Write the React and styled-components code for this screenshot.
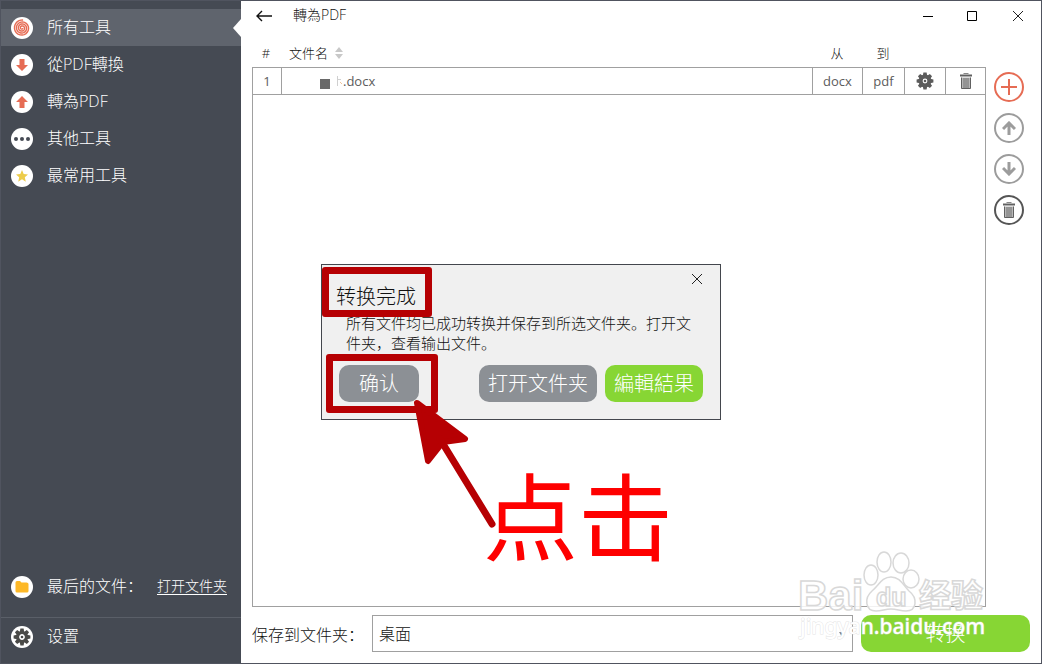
import React from "react";
import styled, { createGlobalStyle } from "styled-components";

const GlobalStyle = createGlobalStyle`
  * {
    box-sizing: border-box;
  }
  body {
    margin: 0;
    background: #fff;
    color: #111;
    font-family: "Open Sans", "Noto Sans CJK SC", sans-serif;
    font-size: 16px;
    font-weight: 300;
  }
  button, select {
    font: inherit;
    color: inherit;
    margin: 0;
    padding: 0;
    border: 0;
    background: none;
    cursor: pointer;
  }
  svg {
    display: block;
  }
`;

const Window = styled.div`
  position: relative;
  display: grid;
  grid-template-columns: 240px 1fr;
  min-height: 100vh;
  border: 1px solid #50545f;
`;

const Sidebar = styled.aside`
  display: flex;
  flex-direction: column;
  padding-top: 8px;
  background: #454a53;
  color: #fff;
`;

const Menu = styled.nav`
  flex: 1;
`;

const MenuItem = styled.button`
  position: relative;
  display: flex;
  align-items: center;
  gap: 14px;
  width: 100%;
  height: 37px;
  padding-left: 10px;
  text-align: left;
  background: ${(props) => (props.$active ? "#5f646d" : "transparent")};
  &:hover {
    background: #5f646d;
  }
`;

const MenuLabel = styled.span`
  padding-bottom: 2px;
  line-height: 24px;
`;

const Pointer = styled.span`
  position: absolute;
  right: 0;
  top: 10px;
  border: solid transparent;
  border-width: 9px 8px 9px 0;
  border-right-color: #fff;
`;

const LastFile = styled.div`
  display: flex;
  align-items: center;
  gap: 14px;
  height: 62px;
  padding: 0 14px 0 10px;
  border-bottom: 1px solid #5a5f68;
`;

const OpenLink = styled.a`
  margin-left: auto;
  padding-bottom: 4px;
  color: #fff;
  font-size: 14px;
  text-underline-offset: 3px;
`;

const Settings = styled.div`
  padding-bottom: 8px;
`;

const Main = styled.main`
  display: flex;
  flex-direction: column;
  padding-left: 11px;
`;

const TitleBar = styled.header`
  display: flex;
  align-items: center;
  height: 30px;
  padding-right: 1px;
`;

const BackButton = styled.button`
  width: 41px;
  padding-left: 4px;
`;

const Title = styled.h1`
  flex: 1;
  margin: 0;
  font-size: 14px;
  font-weight: 300;
  line-height: 28px;
  padding-bottom: 2px;
`;

const WindowButton = styled.button`
  display: grid;
  place-items: center;
  width: 45px;
  height: 28px;
`;

const Content = styled.div`
  display: flex;
  flex: 1;
  padding-top: 8px;
`;

const FilePane = styled.section`
  display: flex;
  flex: 1;
  flex-direction: column;
`;

const FileTable = styled.table`
  width: 100%;
  table-layout: fixed;
  border-spacing: 0;
  font-size: 13px;
  th {
    height: 28px;
    padding: 0 2px 0 0;
    font-weight: 300;
    line-height: 20px;
  }
  td {
    height: 28px;
    padding: 0;
    border: solid #a0a0a0;
    border-width: 1px 1px 1px 0;
    color: #5c5c5c;
    font-weight: 400;
    line-height: 20px;
    text-align: center;
  }
  td:first-child {
    border-left-width: 1px;
  }
`;

const Col = styled.col`
  width: ${(props) => props.$width};
`;

const NameHead = styled.span`
  display: flex;
  align-items: center;
  gap: 7px;
  padding-left: 7px;
`;

const FileName = styled.span`
  display: flex;
  align-items: center;
  padding-left: 38px;
`;

const Square = styled.span`
  width: 10px;
  height: 10px;
  margin: 6px 6px 0 0;
  background: #696969;
`;

const CellButton = styled.button`
  display: grid;
  place-items: center;
  width: 100%;
  height: 26px;
`;

const DropArea = styled.div`
  flex: 1;
  border: solid #a0a0a0;
  border-width: 0 1px 1px;
`;

const Tools = styled.div`
  display: flex;
  flex-direction: column;
  gap: 11px;
  width: 55px;
  padding: 33px 0 0 8px;
`;

const RoundButton = styled.button`
  display: grid;
  place-items: center;
  width: 30px;
  height: 30px;
  border: 2px solid;
  border-radius: 50%;
  color: ${(props) => props.$color};
`;

const Footer = styled.footer`
  display: flex;
  align-items: center;
  gap: 8px;
  padding: 8px 11px 11px 0;
`;

const FolderSelect = styled.select`
  flex: 1;
  height: 37px;
  padding: 0 6px;
  border: 1px solid #a0a0a0;
  appearance: none;
`;

const SelectBox = styled.div`
  position: relative;
  display: flex;
  flex: 1;
`;

const Caret = styled.span`
  position: absolute;
  right: 8px;
  top: 17px;
  border: solid transparent;
  border-width: 5px 3px 0;
  border-top-color: #888;
  pointer-events: none;
`;

const ConvertButton = styled.button`
  width: 169px;
  height: 37px;
  border-radius: 10px;
  background: #87d634;
  color: #fff;
  font-size: 20px;
  line-height: 36px;
`;

const Overlay = styled.div`
  position: absolute;
  inset: 20px 0 0;
  display: grid;
  place-items: center;
  pointer-events: none;
`;

const Dialog = styled.div`
  position: relative;
  width: 400px;
  padding: 0 17px 17px 14px;
  border: 1px solid #43464d;
  background: #f0f0f0;
  pointer-events: auto;
`;

const CloseRow = styled.div`
  display: flex;
  justify-content: flex-end;
  height: 18px;
  padding-top: 8px;
`;

const DialogTitle = styled.h2`
  margin: 0;
  font-size: 20px;
  font-weight: 300;
  line-height: 28px;
`;

const DialogText = styled.p`
  margin: 2px 0 12px;
  padding: 0 10px;
  font-size: 15px;
  line-height: 20px;
`;

const DialogButtons = styled.div`
  display: flex;
  gap: 8px;
  padding-left: 3px;
`;

const DialogButton = styled.button`
  height: 37px;
  padding: 0 ${(props) => (props.$wide ? "20px" : "9px")};
  margin-right: ${(props) => (props.$wide ? "auto" : "0")};
  border-radius: 10px;
  background: ${(props) => (props.$green ? "#87d634" : "#8c9095")};
  color: #fff;
  font-size: 20px;
  line-height: 36px;
`;

const Marker = styled.span`
  position: absolute;
  left: ${(props) => props.$left};
  top: ${(props) => props.$top};
  width: ${(props) => props.$width};
  height: ${(props) => props.$height};
  border: 7px solid #b60003;
  border-radius: 3px;
  pointer-events: none;
`;

const Arrow = styled.svg`
  position: absolute;
  left: 88px;
  top: 130px;
  pointer-events: none;
`;

const Callout = styled.strong`
  position: absolute;
  left: 161px;
  top: 193px;
  color: #fe0000;
  font-family: "Noto Sans CJK SC", sans-serif;
  font-size: 95px;
  font-weight: 400;
  line-height: 110px;
  white-space: nowrap;
  pointer-events: none;
`;

const Watermark = styled.svg`
  position: absolute;
  right: 48px;
  bottom: 17px;
  pointer-events: none;
`;

const Disc = ({ children }) => (
  <svg width="22" height="22" viewBox="0 0 22 22" aria-hidden="true">
    <circle cx="11" cy="11" r="11" fill="#fff" />
    {children}
  </svg>
);

const gearTeeth = [0, 45, 90, 135, 180, 225, 270, 315];

const Gear = ({ color, ring, size }) => (
  <svg width={size} height={size} viewBox="-9 -9 18 18" aria-hidden="true">
    {gearTeeth.map((angle) => (
      <path key={angle} d="M-1.600-8.400h3.200l.6 3.400h-4.400z" fill={color} transform={`rotate(${angle})`} />
    ))}
    <circle r="4.400" fill="none" stroke={color} strokeWidth={ring} />
    <circle r="1.300" fill={color} />
  </svg>
);

const Trash = () => (
  <svg width="12" height="17" viewBox="0 0 12 17" fill="none" stroke="#606060" aria-hidden="true">
    <path d="M3.500 .5h5" stroke="#888" />
    <path d="M0 2.500h12" strokeWidth="2" />
    <path d="M1.500 4.500v11h9v-11" fill="#b8b8b8" />
    <path d="M4 5v10M6 5v10M8 5v10" strokeWidth=".8" />
  </svg>
);

const Cross = () => (
  <svg width="12" height="12" viewBox="0 0 12 12" stroke="#222" aria-hidden="true">
    <path d="M1 1l10 10M11 1L1 11" />
  </svg>
);

const spiral = Array.from({ length: 80 }, (_, i) => {
  const angle = i * 0.3;
  const radius = 0.6 + i * 0.095;
  return `${11 + radius * Math.cos(angle)},${11 + radius * Math.sin(angle)}`;
}).join(" ");

const menu = [
  {
    label: "所有工具",
    icon: <polyline points={spiral} fill="none" stroke="#e66c54" strokeWidth="1.400" />,
  },
  { label: "從PDF轉換", icon: <path fill="#e66c54" d="M8.500 5h5v6h3.500l-6 6-6-6h3.500z" /> },
  { label: "轉為PDF", icon: <path fill="#e66c54" d="M8.500 17h5v-6h3.500l-6-6-6 6h3.500z" /> },
  {
    label: "其他工具",
    icon: (
      <g fill="#454a53">
        <circle cx="5" cy="11" r="2" />
        <circle cx="11" cy="11" r="2" />
        <circle cx="17" cy="11" r="2" />
      </g>
    ),
  },
  {
    label: "最常用工具",
    icon: <path fill="#edcc4a" d="M11 5l1.700 4 4.300.4-3.200 2.900 1 4.400-3.800-2.400-3.800 2.400 1-4.400L5 9.400 9.300 9z" />,
  },
];

const App = () => {
  return (
    <>
      <GlobalStyle />
      <Window>
        <Sidebar>
          <Menu>
            {menu.map((item, index) => (
              <MenuItem key={item.label} $active={index === 0}>
                <Disc>{item.icon}</Disc>
                <MenuLabel>{item.label}</MenuLabel>
                {index === 0 && <Pointer />}
              </MenuItem>
            ))}
          </Menu>
          <LastFile>
            <Disc>
              <path fill="#fdb827" d="M4.500 6.500q0-1.500 1.500-1.500h3l1.500 1.500h5q2 0 2 1.500v7q0 1.500-1.500 1.500H6q-1.500 0-1.500-1.500z" />
            </Disc>
            <MenuLabel>最后的文件：</MenuLabel>
            <OpenLink href="#folder">打开文件夹</OpenLink>
          </LastFile>
          <Settings>
            <MenuItem>
              <Disc>
                <svg x="2" y="2" width="18" height="18">
                  <Gear color="#4a4a48" ring="3" size="18" />
                </svg>
              </Disc>
              <MenuLabel>设置</MenuLabel>
            </MenuItem>
          </Settings>
        </Sidebar>

        <Main>
          <TitleBar>
            <BackButton aria-label="返回">
              <svg width="17" height="12" viewBox="0 0 17 12" fill="none" stroke="#111" strokeWidth="1.400">
                <path d="M16 6H1M6 1L1 6l5 5" />
              </svg>
            </BackButton>
            <Title>轉為PDF</Title>
            <WindowButton aria-label="最小化">
              <svg width="10" height="11" stroke="#000">
                <path d="M0 5.500h10" />
              </svg>
            </WindowButton>
            <WindowButton aria-label="最大化">
              <svg width="11" height="11" fill="none" stroke="#000">
                <path d="M.5.5h9v9H.5z" />
              </svg>
            </WindowButton>
            <WindowButton aria-label="关闭">
              <Cross />
            </WindowButton>
          </TitleBar>

          <Content>
            <FilePane>
              <FileTable>
                <colgroup>
                  <Col $width="30px" />
                  <Col $width="auto" />
                  <Col $width="50px" />
                  <Col $width="42px" />
                  <Col $width="41px" />
                  <Col $width="40px" />
                </colgroup>
                <thead>
                  <tr>
                    <th>#</th>
                    <th>
                      <NameHead>
                        文件名
                        <svg width="8" height="12" fill="#c8c8c8">
                          <path d="M0 5l4-5 4 5zM0 7h8l-4 5z" />
                        </svg>
                      </NameHead>
                    </th>
                    <th>从</th>
                    <th>到</th>
                    <th aria-label="设置" />
                    <th aria-label="删除" />
                  </tr>
                </thead>
                <tbody>
                  <tr>
                    <td>1</td>
                    <td>
                      <FileName>
                        <Square />
                        <svg width="7" height="12" fill="none" aria-hidden="true">
                          <path d="M1.500 1v10M2 4.500h3" stroke="#d0d0d0" />
                          <path d="M4 7l2 2" stroke="#f0c49c" />
                        </svg>
                        .docx
                      </FileName>
                    </td>
                    <td>docx</td>
                    <td>pdf</td>
                    <td>
                      <CellButton aria-label="设置">
                        <Gear color="#5c5c5c" ring="4" size="18" />
                      </CellButton>
                    </td>
                    <td>
                      <CellButton aria-label="删除">
                        <Trash />
                      </CellButton>
                    </td>
                  </tr>
                </tbody>
              </FileTable>
              <DropArea />
            </FilePane>
            <Tools>
              <RoundButton $color="#e66c54" aria-label="添加">
                <svg width="16" height="16" stroke="currentColor" strokeWidth="2">
                  <path d="M8 0v16M0 8h16" />
                </svg>
              </RoundButton>
              <RoundButton $color="#9c9c9c" aria-label="上移">
                <svg width="14" height="14" fill="none" stroke="currentColor" strokeWidth="3">
                  <path d="M7 14V2M1 8l6-6 6 6" />
                </svg>
              </RoundButton>
              <RoundButton $color="#9c9c9c" aria-label="下移">
                <svg width="14" height="14" fill="none" stroke="currentColor" strokeWidth="3">
                  <path d="M7 0v12M1 6l6 6 6-6" />
                </svg>
              </RoundButton>
              <RoundButton $color="#555" aria-label="清空">
                <Trash />
              </RoundButton>
            </Tools>
          </Content>

          <Footer>
            <label htmlFor="folder">保存到文件夹：</label>
            <SelectBox>
              <FolderSelect id="folder">
                <option>桌面</option>
              </FolderSelect>
              <Caret />
            </SelectBox>
            <ConvertButton>转换</ConvertButton>
          </Footer>
        </Main>

        <Overlay>
          <Dialog role="dialog" aria-labelledby="dialog-title">
            <CloseRow>
              <button aria-label="关闭">
                <Cross />
              </button>
            </CloseRow>
            <DialogTitle id="dialog-title">转换完成</DialogTitle>
            <DialogText>所有文件均已成功转换并保存到所选文件夹。打开文件夹，查看输出文件。</DialogText>
            <DialogButtons>
              <DialogButton $wide>确认</DialogButton>
              <DialogButton>打开文件夹</DialogButton>
              <DialogButton $green>編輯結果</DialogButton>
            </DialogButtons>
            <Marker $left="0" $top="2px" $width="110px" $height="50px" />
            <Marker $left="4px" $top="89px" $width="112px" $height="59px" />
            <Arrow width="90" height="140" fill="#b60003" stroke="#b60003" strokeLinejoin="round" strokeLinecap="round">
              <path strokeWidth="6" d="M7 8L55 44 33 47 18 66z" />
              <path strokeWidth="7" d="M30 44L82 129" />
            </Arrow>
            <Callout>点击</Callout>
          </Dialog>
        </Overlay>

        <Watermark width="196" height="96" viewBox="0 0 196 96" aria-hidden="true">
          <g fill="#fff" fillOpacity=".85" stroke="#d8d8d8" strokeWidth="1.500" fontFamily="Liberation Sans" fontWeight="700">
            <text x="1" y="60" fontSize="42">Bai</text>
            <ellipse cx="74" cy="25" rx="7" ry="10" />
            <ellipse cx="87" cy="12" rx="7" ry="10" />
            <ellipse cx="104" cy="13" rx="8" ry="10" />
            <ellipse cx="114" cy="29" rx="8" ry="9" />
            <path d="M94 27c9 0 12 8 18 14 9 7 8 20-3 20-6 0-9-2-15-2s-9 2-15 2c-11 0-12-13-4-20 7-6 10-14 19-14z" />
            <text x="79" y="56" fontSize="25">du</text>
            <text x="122" y="57" fontSize="32" fontFamily="Noto Sans CJK SC">经验</text>
          </g>
          <text x="3" y="84" fontSize="21" fontFamily="Noto Sans" fontWeight="500" fill="#fff" stroke="#d8d8d8" strokeOpacity=".7" strokeWidth="1" paintOrder="stroke">
            jingyan.baidu.com
          </text>
        </Watermark>
      </Window>
    </>
  );
};

export default App;
